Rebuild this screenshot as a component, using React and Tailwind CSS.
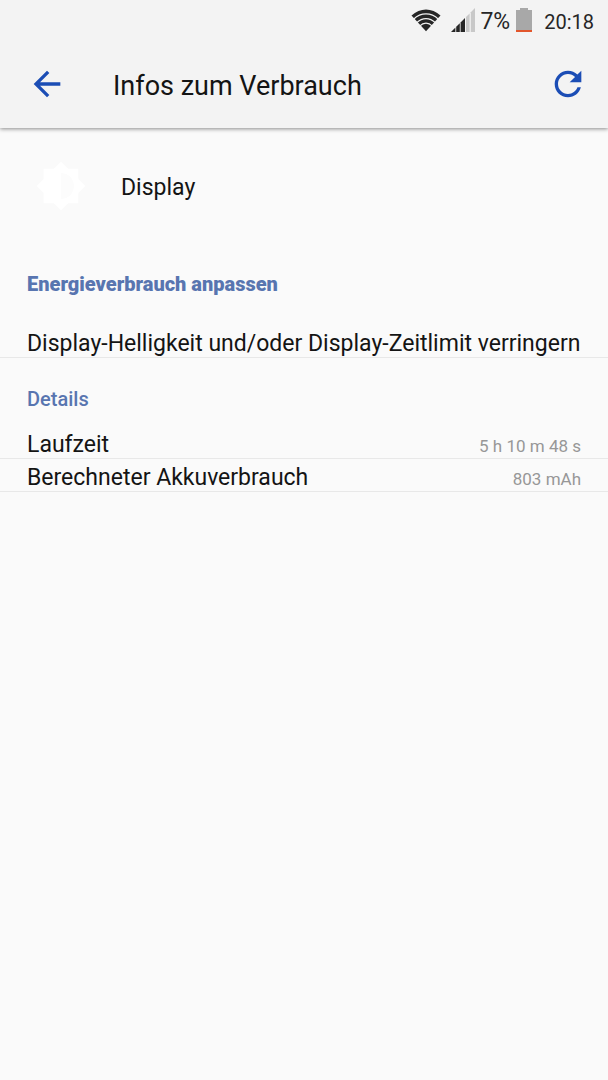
import React from 'react';

const details = [
  { label: 'Laufzeit', value: '5 h 10 m 48 s' },
  { label: 'Berechneter Akkuverbrauch', value: '803 mAh' },
];

const WifiIcon = () => (
  <svg width="30" height="24" viewBox="0 0 30 24" fill="none" aria-hidden="true">
    <path d="M0.5 7.6C9 -0.6 21 -0.6 29.5 7.6L15 23.2z" fill="#262626" />
    <g stroke="#f3f3f3" strokeWidth="1.2">
      <path d="M2.6 11.2C10 4.2 20 4.2 27.4 11.2" />
      <path d="M5.6 14.8C11.4 9.2 18.6 9.2 24.4 14.8" />
      <path d="M8.6 18.2C12.6 14.2 17.4 14.2 21.4 18.2" />
    </g>
  </svg>
);

const SignalIcon = () => (
  <svg width="24" height="24" viewBox="0 0 24 24" aria-hidden="true">
    <path d="M0 24L4.4 19.6V24z" fill="#262626" />
    <path d="M5.2 18.8L8.8 15.2V24H5.2z" fill="#262626" />
    <path d="M9.6 14.4L14 10V24H9.6z" fill="#262626" />
    <path d="M15 9L18.6 5.4V24H15z" fill="#c8c8c8" />
    <path d="M19.8 4.2L24 0V24H19.8z" fill="#c8c8c8" />
  </svg>
);

const BatteryIcon = () => (
  <svg width="16" height="24" viewBox="0 0 16 24" aria-hidden="true">
    <path d="M4 0H12V2H16V24H0V2H4z" fill="#a8a8a8" />
    <path d="M0 22H16V24H0z" fill="#e2562c" />
  </svg>
);

const ArrowBackIcon = () => (
  <svg width="40" height="40" viewBox="0 0 24 24" fill="#1b4db5" aria-hidden="true">
    <path d="M20 11H7.83l5.59-5.59L12 4l-8 8 8 8 1.41-1.41L7.83 13H20v-2z" />
  </svg>
);

const RefreshIcon = () => (
  <svg width="40" height="40" viewBox="0 0 24 24" fill="#1b4db5" aria-hidden="true">
    <path d="M17.65 6.35C16.2 4.9 14.21 4 12 4c-4.42 0-7.99 3.58-7.99 8s3.57 8 7.99 8c3.73 0 6.84-2.55 7.73-6h-2.08c-.82 2.33-3.04 4-5.65 4-3.31 0-6-2.69-6-6s2.69-6 6-6c1.66 0 3.14.69 4.22 1.78L13 11h7V4l-2.35 2.35z" />
  </svg>
);

const BrightnessIcon = () => (
  <svg width="52" height="52" viewBox="0 0 24 24" fill="#ffffff" aria-hidden="true">
    <path d="M20 15.31L23.31 12 20 8.69V4h-4.69L12 .69 8.69 4H4v4.69L.69 12 4 15.31V20h4.69L12 23.31 15.31 20H20v-4.69z" />
    <path d="M12 18V6c3.31 0 6 2.69 6 6s-2.69 6-6 6z" fill="#fcfcfc" />
  </svg>
);

const StatusBar = () => (
  <div className="flex h-10 items-center justify-end pr-3.5 text-[#262626]">
    <WifiIcon />
    <span className="ml-2.5">
      <SignalIcon />
    </span>
    <span className="ml-[5px] pt-1 text-[23px]">7%</span>
    <span className="ml-1.5">
      <BatteryIcon />
    </span>
    <span className="ml-3 pt-1 text-xl">20:18</span>
  </div>
);

const App = () => {
  return (
    <div className="min-h-screen bg-[#fafafa] font-['Roboto',sans-serif] text-[#141414]">
      <header className="bg-[#f3f3f3] shadow-[0_1px_4px_rgba(0,0,0,0.45)]">
        <StatusBar />
        <div className="flex h-22 items-center px-5">
          <button type="button" aria-label="Zurück" className="ml-[7px]">
            <ArrowBackIcon />
          </button>
          <h1 className="ml-[46px] flex-1 pt-1 text-[27px]">Infos zum Verbrauch</h1>
          <button type="button" aria-label="Aktualisieren">
            <RefreshIcon />
          </button>
        </div>
      </header>

      <main>
        <div className="flex items-center px-[35px] pt-8">
          <BrightnessIcon />
          <h2 className="ml-[34px] pt-1 text-[23px]">Display</h2>
        </div>

        <section className="pt-[58px]">
          <h3 className="px-[27px] text-xl font-black text-[#5875b0]">Energieverbrauch anpassen</h3>
          <p className="mt-[27px] border-b border-[#e8e8e8] px-[27px] pt-1.5 text-[23px] leading-[26px]">
            Display-Helligkeit und/oder Display-Zeitlimit verringern
          </p>
        </section>

        <section className="pt-[27px]">
          <h3 className="px-[27px] text-xl font-medium text-[#5875b0]">Details</h3>
          <dl className="mt-[13px]">
            {details.map((item) => (
              <div key={item.label} className="flex items-baseline justify-between border-b border-[#e8e8e8] px-[27px] pt-1.5">
                <dt className="text-[23px] leading-[26px]">{item.label}</dt>
                <dd className="text-[17px] leading-5 text-[#979797]">{item.value}</dd>
              </div>
            ))}
          </dl>
        </section>
      </main>
    </div>
  );
};

export default App;
